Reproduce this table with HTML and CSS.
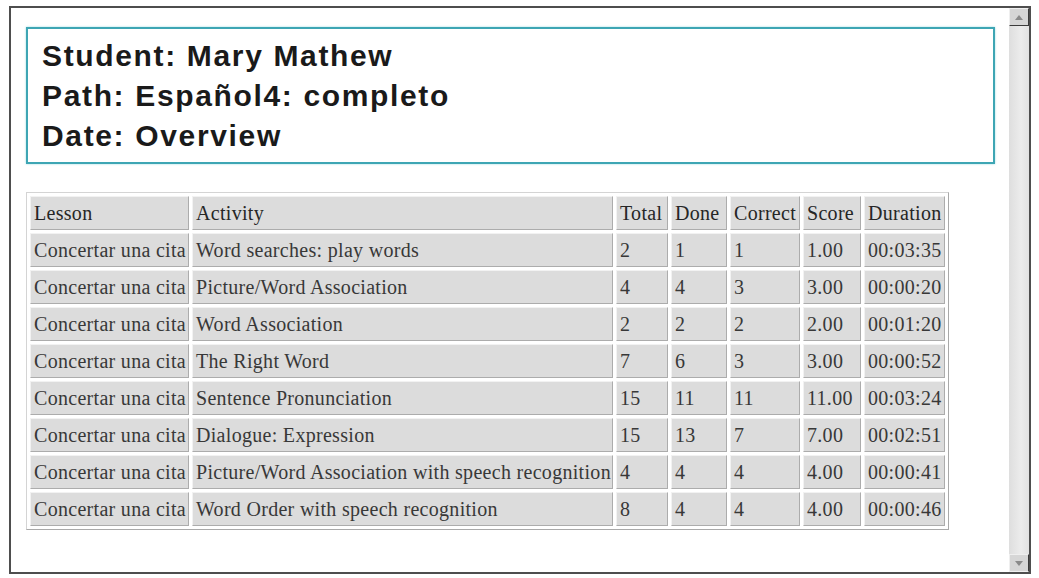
FILE: index.html
```html
<!DOCTYPE html>
<html>
<head>
<meta charset="utf-8">
<title>Student report</title>
<link rel="stylesheet" href="styles.css">
</head>
<body>
<div class="frame">
  <div class="content">
    <div class="heading">
      <div class="heading-line">Student: Mary Mathew</div>
      <div class="heading-line">Path: Español4: completo</div>
      <div class="heading-line">Date: Overview</div>
    </div>
    <table class="report">
      <colgroup>
        <col class="c-lesson">
        <col class="c-activity">
        <col class="c-total">
        <col class="c-done">
        <col class="c-correct">
        <col class="c-score">
        <col class="c-duration">
      </colgroup>
      <thead>
        <tr><th>Lesson</th><th>Activity</th><th>Total</th><th>Done</th><th>Correct</th><th>Score</th><th>Duration</th></tr>
      </thead>
      <tbody>
        <tr><td>Concertar una cita</td><td>Word searches: play words</td><td>2</td><td>1</td><td>1</td><td>1.00</td><td>00:03:35</td></tr>
        <tr><td>Concertar una cita</td><td>Picture/Word Association</td><td>4</td><td>4</td><td>3</td><td>3.00</td><td>00:00:20</td></tr>
        <tr><td>Concertar una cita</td><td>Word Association</td><td>2</td><td>2</td><td>2</td><td>2.00</td><td>00:01:20</td></tr>
        <tr><td>Concertar una cita</td><td>The Right Word</td><td>7</td><td>6</td><td>3</td><td>3.00</td><td>00:00:52</td></tr>
        <tr><td>Concertar una cita</td><td>Sentence Pronunciation</td><td>15</td><td>11</td><td>11</td><td>11.00</td><td>00:03:24</td></tr>
        <tr><td>Concertar una cita</td><td>Dialogue: Expression</td><td>15</td><td>13</td><td>7</td><td>7.00</td><td>00:02:51</td></tr>
        <tr><td>Concertar una cita</td><td>Picture/Word Association with speech recognition</td><td>4</td><td>4</td><td>4</td><td>4.00</td><td>00:00:41</td></tr>
        <tr><td>Concertar una cita</td><td>Word Order with speech recognition</td><td>8</td><td>4</td><td>4</td><td>4.00</td><td>00:00:46</td></tr>
      </tbody>
    </table>
  </div>
  <div class="scrollbar">
    <div class="sb-btn"><svg width="8" height="5" viewBox="0 0 8 5"><path d="M0 5 L4 0 L8 5 Z" fill="#8a8a8a"/></svg></div>
    <div class="sb-track"></div>
    <div class="sb-btn sb-down"><svg width="8" height="5" viewBox="0 0 8 5"><path d="M0 0 L4 5 L8 0 Z" fill="#8a8a8a"/></svg></div>
  </div>
</div>
</body>
</html>
```
FILE: styles.css
```css
html, body {
  margin: 0;
  padding: 0;
  background: #ffffff;
}

.frame {
  margin: 6px 0 0 9px;
  width: 1022px;
  height: 568px;
  box-sizing: border-box;
  border: 2px solid #4e4e4e;
  display: flex;
  background: #ffffff;
}

.content {
  flex: 1;
  padding: 19px 14px 0 15px;
  overflow: hidden;
}

.heading {
  border: 2px solid #3ea6b4;
  box-shadow: 0 0 2px #9fdbe3;
  padding: 7px 14px 6px 14px;
  font-family: "Liberation Sans", Arial, sans-serif;
  font-weight: bold;
  font-size: 30px;
  line-height: 40px;
  letter-spacing: 1.65px;
  color: #1a1a1a;
}

.report {
  margin-top: 28px;
  border-collapse: separate;
  border-spacing: 3px;
  table-layout: fixed;
  width: 922px;
  border-style: solid;
  border-width: 1px;
  border-color: #d4d4d4 #a9a9a9 #a9a9a9 #d4d4d4;
  font-family: "Liberation Serif", "Times New Roman", serif;
  font-size: 20px;
  letter-spacing: 0.3px;
  color: #383838;
}

.c-lesson { width: 159px; }
.c-activity { width: 421px; }
.c-total { width: 52px; }
.c-done { width: 56px; }
.c-correct { width: 70px; }
.c-score { width: 58px; }
.c-duration { width: 81px; }

.report th,
.report td {
  height: 34px;
  box-sizing: border-box;
  padding: 0 1px 0 3px;
  background: #dcdcdc;
  border-style: solid;
  border-width: 1px;
  border-color: #f2f2f2 #acacac #acacac #f2f2f2;
  text-align: left;
  font-weight: normal;
  white-space: nowrap;
  overflow: hidden;
  vertical-align: middle;
}

.report th {
  color: #262626;
}

.scrollbar {
  width: 20px;
  display: flex;
  flex-direction: column;
  background: #e6e6e6;
}

.sb-btn {
  height: 18px;
  box-sizing: border-box;
  background: #d6d6d6;
  border-style: solid;
  border-width: 1px;
  border-color: #efefef #3c3c3c #3c3c3c #efefef;
  display: flex;
  align-items: center;
  justify-content: center;
}

.sb-track {
  flex: 1;
  background: linear-gradient(to right, #dedede, #ececec 60%, #e2e2e2);
}

.sb-down {
  border-color: #efefef #3c3c3c #efefef #efefef;
}
```
